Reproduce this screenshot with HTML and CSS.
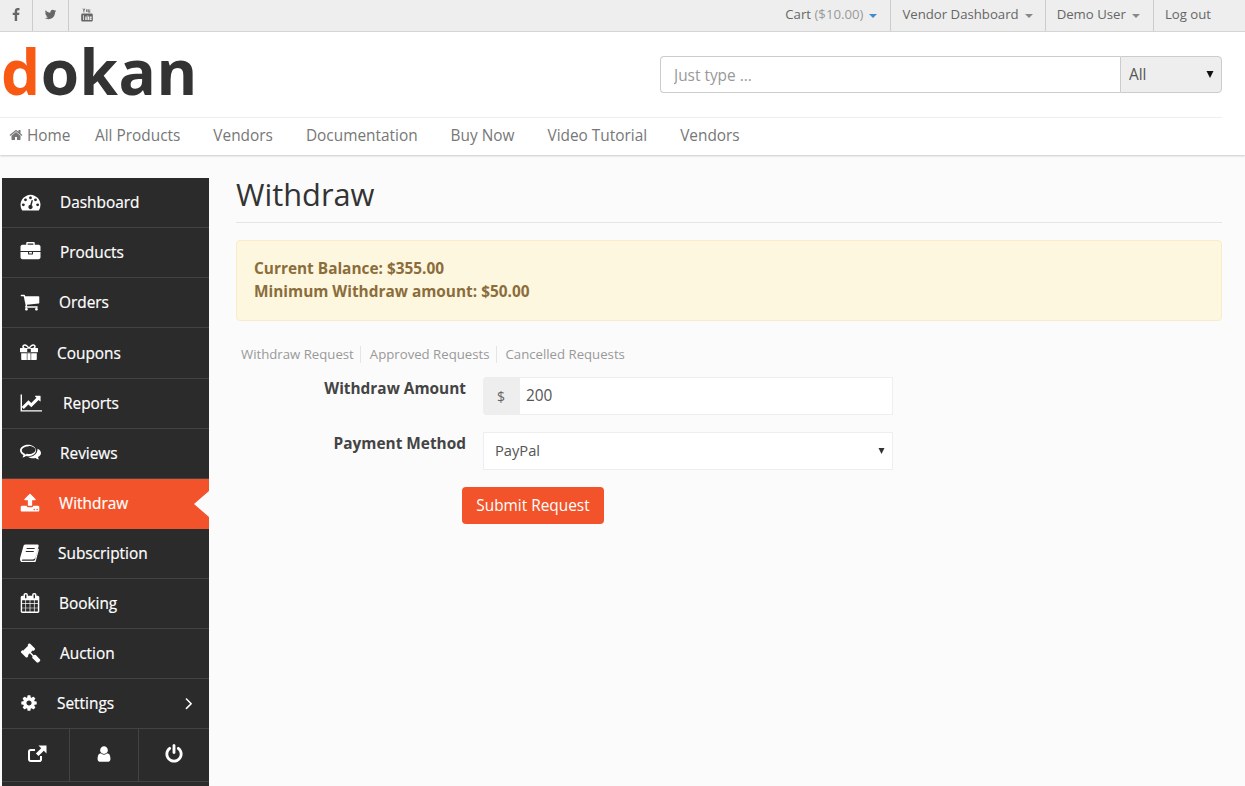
FILE: index.html
```html
<!DOCTYPE html>
<html lang="en">
<head>
<meta charset="utf-8">
<title>Withdraw</title>
<link rel="stylesheet" href="styles.css">
</head>
<body>
<div class="topbar">
  <ul class="social">
    <li><svg width="14" height="14" viewBox="0 0 1792 1792"><path d="M1343 12v264h-157q-86 0-116 36t-30 108v189h293l-39 296h-254v759h-306v-759h-255v-296h255v-218q0-186 104-288.5t277-102.5q147 0 228 12z"/></svg></li>
    <li><svg width="13" height="13" viewBox="0 0 1792 1792"><path d="M1684 408q-67 98-162 167 1 14 1 42 0 130-38 259.5t-115.5 248.5-184.5 210.5-258 146-323 54.5q-271 0-496-145 35 4 78 4 225 0 401-138-105-2-188-64.5t-114-159.5q33 5 61 5 43 0 85-11-112-23-185.5-111.5t-73.5-205.5v-4q68 38 146 41-66-44-105-115t-39-154q0-88 44-163 121 149 294.5 238.5t371.5 99.5q-8-38-8-74 0-134 94.5-228.5t228.5-94.5q140 0 236 102 109-21 205-78-37 115-142 178 93-10 186-50z"/></svg></li>
    <li><svg width="12" height="14" viewBox="0 0 12 14"><path d="M1.5 0.5l1 2.4v1.6h.8V2.900l1-2.400h-.8l-.6 1.500-.6-1.500zM5.200 1.300h1.300v2.700H5.200zM7.200 1.300h.7v2.200h.6V1.300h.7v3.100H7.200z"/><path fill-rule="evenodd" d="M1.500 5.600h9a1.300 1.300 0 0 1 1.300 1.300v5.300a1.300 1.300 0 0 1-1.300 1.300h-9a1.300 1.300 0 0 1-1.300-1.300V6.900a1.300 1.300 0 0 1 1.300-1.300zM2 7.300v4.800h.8V7.300zM4 8.400v3.700h1.700V8.400h-.7v3H4.700v-3zM6.500 7.300v4.800h1.600V8.400H7.200V7.300zM8.700 8.400v3.700h1.900v-1h-1.200v-.7h1.200v-2z"/></svg></li>
  </ul>
  <ul class="account">
    <li class="cart">Cart <span class="muted">($10.00)</span><i class="caret caret-blue"></i></li>
    <li>Vendor Dashboard<i class="caret"></i></li>
    <li class="user">Demo User<i class="caret"></i></li>
    <li>Log out</li>
  </ul>
</div>
<header class="header">
  <div class="brand-row">
    <div class="logo"><span class="logo-d">d</span>okan</div>
    <form class="search">
      <input class="search-input" type="text" placeholder="Just type ...">
      <select class="search-select"><option>All</option></select>
    </form>
  </div>
  <nav class="nav">
    <a class="nav-home"><svg width="14" height="14" viewBox="0 0 1792 1792"><path d="M1472 992v480q0 26-19 45t-45 19h-384v-384h-256v384h-384q-26 0-45-19t-19-45v-480q0-1 .5-3t.5-3l575-474 575 474q1 2 1 6zm223-69l-62 74q-8 9-21 11h-3q-13 0-21-7l-692-577-692 577q-12 8-24 7-13-2-21-11l-62-74q-8-10-7-23.5t11-21.5l719-599q32-26 76-26t76 26l244 204v-195q0-14 9-23t23-9h192q14 0 23 9t9 23v408l219 182q10 8 11 21.5t-7 23.5z"/></svg> Home</a>
    <a>All Products</a>
    <a>Vendors</a>
    <a>Documentation</a>
    <a>Buy Now</a>
    <a>Video Tutorial</a>
    <a>Vendors</a>
  </nav>
</header>
<div class="page">
  <aside class="sidebar">
    <ul class="menu">
      <li><svg width="21" height="20" viewBox="0 0 1792 1792"><path d="M384 1152q0-53-37.500-90.500t-90.500-37.500-90.500 37.500-37.500 90.500 37.500 90.500 90.500 37.500 90.500-37.500 37.500-90.500zm192-448q0-53-37.500-90.500t-90.500-37.500-90.500 37.500-37.500 90.500 37.500 90.500 90.500 37.500 90.500-37.500 37.500-90.500zm428 481l101-382q6-26-7.500-48.500t-38.500-29.500-48 6.500-30 39.500l-101 382q-60 5-107 43.500t-63 98.500q-20 77 20 146t117 89 146-20 89-117q16-60-6-117t-72-91zm660-33q0-53-37.500-90.500t-90.500-37.500-90.500 37.500-37.500 90.500 37.500 90.500 90.500 37.500 90.500-37.500 37.500-90.500zm-640-640q0-53-37.500-90.500t-90.500-37.500-90.500 37.500-37.500 90.500 37.500 90.500 90.500 37.500 90.500-37.500 37.500-90.500zm448 192q0-53-37.500-90.500t-90.500-37.500-90.500 37.500-37.500 90.500 37.500 90.500 90.500 37.500 90.500-37.500 37.500-90.500zm320 448q0 261-141 483-19 29-54 29h-1402q-35 0-54-29-141-221-141-483 0-182 71-348t191-286 286-191 348-71 348 71 286 191 191 286 71 348z"/></svg>Dashboard</li>
      <li><svg width="21" height="20" viewBox="0 0 1792 1792"><path d="M640 256h512v-128h-512v128zm1152 640v480q0 66-47 113t-113 47h-1472q-66 0-113-47t-47-113v-480h672v160q0 26 19 45t45 19h320q26 0 45-19t19-45v-160h672zm-768 0v128h-256v-128h256zm768-480v384h-1792v-384q0-66 47-113t113-47h352v-160q0-40 28-68t68-28h576q40 0 68 28t28 68v160h352q66 0 113 47t47 113z"/></svg>Products</li>
      <li><svg width="20" height="20" viewBox="0 0 1792 1792"><path d="M704 1536q0 52-38 90t-90 38-90-38-38-90 38-90 90-38 90 38 38 90zm896 0q0 52-38 90t-90 38-90-38-38-90 38-90 90-38 90 38 38 90zm128-1088v512q0 24-16.500 42.500t-40.500 21.500l-1044 122q13 60 13 70 0 16-24 64h920q26 0 45 19t19 45-19 45-45 19h-1024q-26 0-45-19t-19-45q0-11 8-31.500t16-36 21.500-40 15.500-29.500l-177-823h-204q-26 0-45-19t-19-45 19-45 45-19h256q16 0 28.500 6.500t19.500 15.500 13 24.500 8 26 5.500 29.500 4.500 26h1201q26 0 45 19t19 45z"/></svg>Orders</li>
      <li><svg width="18" height="18" viewBox="0 0 18 18"><path fill-rule="evenodd" d="M4.800 1.200c1.700 0 3.300 1.500 4.200 3 .9-1.500 2.500-3 4.200-3 1.500 0 2.600 1 2.600 2.300 0 .6-.2 1.100-.6 1.500h2.300c.3 0 .5.200.5.500v3.300c0 .3-.2.500-.5.500H.5c-.3 0-.5-.2-.5-.500V5.500c0-.3.200-.5.500-.5h2.300c-.4-.4-.6-.9-.6-1.500 0-1.300 1.100-2.300 2.600-2.300zm0 1.500c-.6 0-1 .4-1 .9 0 .7.600 1.400 1.500 1.400h2.500c-.7-1.200-1.900-2.300-3-2.300zm8.400 0c-1.100 0-2.300 1.100-3 2.300h2.500c.9 0 1.500-.7 1.500-1.400 0-.5-.4-.9-1-.9zM7.200 5.800v3.300h3.600V5.800z"/><path d="M1.200 10.200h5.600v6.800H2.200c-.6 0-1-.4-1-1zM11.200 10.200h5.600V16c0 .6-.4 1-1 1h-4.600zM7.400 10.200h3.200v6.800H7.400z"/></svg>Coupons</li>
      <li><svg width="24" height="20" viewBox="0 0 2048 1792"><path d="M1920 1536v128h-1920v-1536h128v1408h1792zm-128-1248v435q0 21-19.500 29.500t-35.500-7.500l-121-121-633 633q-10 10-23 10t-23-10l-233-233-416 416-192-192 585-585q10-10 23-10t23 10l233 233 464-464-121-121q-16-16-7.500-35.500t29.500-19.500h435q14 0 23 9t9 23z"/></svg>Reports</li>
      <li><svg width="21" height="18" viewBox="0 0 21 18"><path fill-rule="evenodd" d="M8 .8c4.400 0 8 2.500 8 5.700s-3.600 5.700-8 5.700c-.7 0-1.400-.1-2-.2-1 .8-2.200 1.300-3.600 1.500.5-.8.900-1.600 1-2.500C1.400 10 0 8.400 0 6.500 0 3.300 3.600.8 8 .8zm0 1.800C4.700 2.600 1.800 4.400 1.800 6.500c0 1.400 1.200 2.500 2.900 3.200l.8.300-.1.900c.4-.3.700-.5 1-.8l.3-.4.8.1c.6.100 1.100.200 1.700.200 3.300 0 6.200-1.800 6.200-4 0-2.200-2.900-3.900-6.400-3.900z"/><path d="M17.600 4.700c2 .9 3.400 2.500 3.400 4.300 0 1.700-1.200 3.200-3 4.100.1.900.5 1.700 1 2.400-1.400-.2-2.600-.7-3.600-1.500-.7.100-1.400.2-2.200.2-2 0-3.800-.5-5.100-1.500 3.300.2 9.600-1.200 9.500-8.500z"/></svg>Reviews</li>
      <li class="active"><svg width="20" height="20" viewBox="0 0 1792 1792"><path d="M1344 1472q0-26-19-45t-45-19-45 19-19 45 19 45 45 19 45-19 19-45zm256 0q0-26-19-45t-45-19-45 19-19 45 19 45 45 19 45-19 19-45zm128-224v320q0 40-28 68t-68 28h-1472q-40 0-68-28t-28-68v-320q0-40 28-68t68-28h427q21 56 70.500 92t110.500 36h256q61 0 110.500-36t70.500-92h427q40 0 68 28t28 68zm-325-648q-17 40-59 40h-256v448q0 26-19 45t-45 19h-256q-26 0-45-19t-19-45v-448h-256q-42 0-59-40-17-39 14-69l448-448q18-19 45-19t45 19l448 448q31 30 14 69z"/></svg>Withdraw</li>
      <li><svg width="19" height="18" viewBox="0 0 19 18"><path fill-rule="evenodd" d="M5.500.5h11.800c1 0 1.600.8 1.300 1.800l-3 11c-.4 1.300-1.600 2.200-3 2.200H3.200c-.9 0-1.400.5-1.400 1 0 .2.200.3.500.3h11.200c.8 0 1.300-.4 1.600-1.200l3-11c.5.200.9.800.7 1.500l-3 11c-.3 1-1.200 1.900-2.300 1.900H2.300C.8 18 0 16.600 0 15.200c0-.6.100-1.200.3-1.900L3.500 2C3.800 1 4.500.5 5.500.5zM6.800 4.100l-.3 1h8l.3-1zM5.900 7l-.3 1h8l.3-1z"/></svg>Subscription</li>
      <li><svg width="20" height="20" viewBox="0 0 1792 1792"><path d="M192 1664h288v-288h-288v288zm352 0h320v-288h-320v288zm-352-352h288v-320h-288v320zm352 0h320v-320h-320v320zm-352-384h288v-288h-288v288zm736 736h320v-288h-320v288zm-384-736h320v-288h-320v288zm768 736h288v-288h-288v288zm-384-352h320v-320h-320v320zm-352-864v-288q0-13-9.500-22.500t-22.500-9.500h-64q-13 0-22.500 9.500t-9.500 22.500v288q0 13 9.500 22.500t22.500 9.500h64q13 0 22.500-9.500t9.500-22.500zm736 864h288v-320h-288v320zm-384-384h320v-288h-320v288zm384 0h288v-288h-288v288zm32-480v-288q0-13-9.500-22.500t-22.500-9.500h-64q-13 0-22.500 9.500t-9.500 22.500v288q0 13 9.500 22.500t22.500 9.500h64q13 0 22.500-9.500t9.500-22.500zm384-64v1280q0 52-38 90t-90 38h-1408q-52 0-90-38t-38-90v-1280q0-52 38-90t90-38h128v-96q0-66 47-113t113-47h64q66 0 113 47t47 113v96h384v-96q0-66 47-113t113-47h64q66 0 113 47t47 113v96h128q52 0 90 38t38 90z"/></svg>Booking</li>
      <li><svg width="21" height="20" viewBox="0 0 1792 1792"><path d="M1771 1536q0 53-37 90l-107 108q-39 37-91 37-53 0-90-37l-363-364q-38-36-38-90 0-53 43-96l-256-256-126 126q-14 14-34 14t-34-14q2 2 12.500 12t12.500 13 10 11.500 10 13.500 6 13.500 5.500 16.500 1.500 18q0 38-28 68-3 3-16.500 18t-19 20.500-18.500 16.500-22 15.500-22 9-26 4.500q-40 0-68-28l-408-408q-28-28-28-68 0-13 4.500-26t9-22 15.500-22 16.500-18.500 20.500-19 18-16.500q30-28 68-28 10 0 18 1.500t16.500 5.500 13.500 6 13.500 10 11.500 10 13 12.500 12 12.500q-14-14-14-34t14-34l348-348q14-14 34-14t34 14q-2-2-12.500-12t-12.500-13-10-11.500-10-13.500-6-13.500-5.500-16.500-1.500-18q0-38 28-68 3-3 16.500-18t19-20.500 18.500-16.500 22-15.500 22-9 26-4.500q40 0 68 28l408 408q28 28 28 68 0 13-4.500 26t-9 22-15.500 22-16.500 18.500-20.500 19-18 16.500q-30 28-68 28-10 0-18-1.500t-16.500-5.500-13.500-6-13.500-10-11.500-10-13-12.500-12-12.500q14 14 14 34t-14 34l-126 126 256 256q43-43 96-43 52 0 91 37l363 363q37 39 37 91z"/></svg>Auction</li>
      <li class="has-sub"><svg width="18" height="20" viewBox="0 0 1792 1792"><path d="M1152 896q0-106-75-181t-181-75-181 75-75 181 75 181 181 75 181-75 75-181zm512-109v222q0 12-8 23t-20 13l-185 28q-19 54-39 91 35 50 107 138 10 12 10 25t-9 23q-27 37-99 108t-94 71q-12 0-26-9l-138-108q-44 23-91 38-16 136-29 186-7 28-36 28h-222q-14 0-24.500-8.500t-11.500-21.500l-28-184q-49-16-90-37l-141 107q-10 9-25 9-14 0-25-11-126-114-165-168-7-10-7-23 0-12 8-23 15-21 51-66.500t54-70.500q-27-50-41-99l-183-27q-13-2-21-12.500t-8-23.500v-222q0-12 8-23t19-13l186-28q14-46 39-92-40-57-107-138-10-12-10-24 0-10 9-23 26-36 98.500-107.500t94.500-71.500q13 0 26 10l138 107q44-23 91-38 16-136 29-186 7-28 36-28h222q14 0 24.500 8.500t11.500 21.500l28 184q49 16 90 37l142-107q9-9 24-9 13 0 25 10 129 119 165 170 7 8 7 22 0 12-8 23-15 21-51 66.500t-54 70.500q26 50 41 98l183 28q13 2 21 12.500t8 23.500z"/></svg>Settings<svg class="chev" width="20" height="20" viewBox="0 0 1792 1792"><path d="M1171 960q0 13-10 23l-466 466q-10 10-23 10t-23-10l-50-50q-10-10-10-23t10-23l393-393-393-393q-10-10-10-23t10-23l50-50q10-10 23-10t23 10l466 466q10 10 10 23z"/></svg></li>
    </ul>
    <div class="sidebar-foot">
      <span><svg width="20" height="18" viewBox="0 0 20 18"><path fill="none" stroke="#fff" stroke-width="2" d="M14 11v3.200c0 1-.7 1.800-1.800 1.800H3.800C2.700 16 2 15.200 2 14.200V6.800C2 5.700 2.700 5 3.800 5H8"/><path d="M11.500 .5H19.500v8l-2.700-2.700-5.300 5.300-2.600-2.600 5.300-5.300z"/></svg></span>
      <span><svg width="18" height="20" viewBox="0 0 1792 1792"><path d="M1536 1399q0 109-62.500 187t-150.500 78h-854q-88 0-150.500-78t-62.500-187q0-85 8.500-160.500t31.500-152 58.500-131 94-89 134.500-34.500q131 128 313 128t313-128q76 0 134.500 34.500t94 89 58.500 131 31.500 152 8.500 160.500zm-256-887q0 159-112.500 271.500t-271.500 112.500-271.500-112.500-112.500-271.500 112.500-271.500 271.500-112.500 271.500 112.500 112.500 271.500z"/></svg></span>
      <span><svg width="20" height="20" viewBox="0 0 1792 1792"><path d="M1664 896q0 156-61 298t-164 245-245 164-298 61-298-61-245-164-164-245-61-298q0-182 80.500-343t226.500-270q43-32 95.500-25t83.500 50q32 42 24.500 94.500t-49.500 84.500q-98 74-151.500 181t-53.500 228q0 104 40.500 198.500t109.500 163.500 163.500 109.500 198.500 40.500 198.500-40.500 163.500-109.500 109.500-163.500 40.500-198.500q0-121-53.500-228t-151.500-181q-42-32-49.500-84.500t24.500-94.500q31-43 84-50t95 25q146 109 226.500 270t80.500 343zm-640-768v640q0 52-38 90t-90 38-90-38-38-90v-640q0-52 38-90t90-38 90 38 38 90z"/></svg></span>
    </div>
  </aside>
  <main class="content">
    <h1 class="title">Withdraw</h1>
    <div class="alert">
      <div>Current Balance: $355.00</div>
      <div>Minimum Withdraw amount: $50.00</div>
    </div>
    <ul class="tabs">
      <li>Withdraw Request</li>
      <li>Approved Requests</li>
      <li>Cancelled Requests</li>
    </ul>
    <form class="form">
      <div class="row">
        <label class="label">Withdraw Amount</label>
        <div class="field group"><span class="addon">$</span><input class="control" type="text" value="200"></div>
      </div>
      <div class="row">
        <label class="label">Payment Method</label>
        <div class="field"><select class="control select"><option>PayPal</option></select></div>
      </div>
      <div class="actions"><button class="btn" type="button">Submit Request</button></div>
    </form>
  </main>
</div>
</body>
</html>
```
FILE: styles.css
```css
* { box-sizing: border-box; }
html, body { margin: 0; padding: 0; height: 100%; }
body {
  display: flex;
  flex-direction: column;
  height: 786px;
  overflow: hidden;
  background: #fbfbfb;
  font-family: "Open Sans", sans-serif;
  font-size: 15.400px;
  color: #444;
}
ul { list-style: none; margin: 0; padding: 0; }

.topbar {
  display: flex;
  justify-content: space-between;
  height: 32px;
  padding-right: 23px;
  background: #eee;
  border-bottom: 1px solid #d8d8d8;
  font-size: 13.200px;
  color: #666;
  flex: none;
}
.social, .account { display: flex; }
.social li {
  display: flex;
  align-items: center;
  justify-content: center;
  width: 36px;
  padding-bottom: 2px;
  border-right: 1px solid #ccc;
}
.social li:first-child { width: 33px; }
.social li:last-child { border-right: 0; }
.social svg { fill: #666; }
.account li {
  padding: 0 11px;
  line-height: 29px;
  border-left: 1px solid #ccc;
  white-space: nowrap;
}
.account li:first-child { border-left: 0; }
.account .cart { padding-right: 12px; }
.account .user { padding-right: 12px; }
.muted { color: #999; }
.caret {
  display: inline-block;
  width: 0;
  height: 0;
  margin: 0 1px 0 6px;
  vertical-align: 1px;
  border-left: 4px solid transparent;
  border-right: 4px solid transparent;
  border-top: 4px solid #888;
}
.caret-blue { border-top-color: #428bca; }

.header {
  flex: none;
  height: 123px;
  padding-right: 23px;
  background: #fff;
  box-shadow: 0 1px 2px rgba(0, 0, 0, .2);
  position: relative;
}
.brand-row {
  display: flex;
  justify-content: space-between;
  align-items: flex-start;
  height: 86px;
  border-bottom: 1px solid #eee;
}
.logo {
  margin: 0 0 0 1px;
  font-size: 62px;
  line-height: 78px;
  font-weight: 700;
  letter-spacing: .5px;
  color: #333;
}
.logo-d { color: #f85a14; }
.search { display: flex; width: 562px; height: 37px; margin-top: 24px; }
.search-input {
  flex: 1;
  min-width: 0;
  padding: 1px 13px 0;
  border: 1px solid #ccc;
  border-right: 0;
  border-radius: 4px 0 0 4px;
  font: 15.400px "Open Sans", sans-serif;
  color: #555;
  background: #fff;
}
.search-input::placeholder { color: #999; }
.search-select {
  appearance: none;
  width: 102px;
  padding: 0 8px;
  border: 1px solid #ccc;
  border-radius: 0 4px 4px 0;
  background: #eee url("data:image/svg+xml,%3Csvg xmlns='http://www.w3.org/2000/svg' width='8' height='7'%3E%3Cpath d='M.5 0h7L4 7z' fill='%23111'/%3E%3C/svg%3E") no-repeat right 7px center;
  font: 15.400px "Open Sans", sans-serif;
  color: #555;
}
.nav {
  display: flex;
  align-items: center;
  gap: 33px;
  height: 37px;
  padding: 0 0 2px 9px;
  color: #777;
}
.nav-home { margin-right: -8.500px; white-space: nowrap; }
.nav-home svg { fill: #777; vertical-align: -1px; }

.page { flex: 1; display: flex; min-height: 0; padding-top: 23px; }
.sidebar {
  flex: none;
  width: 207px;
  margin-left: 2px;
  background: #2b2b2b;
  color: #fff;
  font-size: 15.400px;
  font-weight: 500;
  -webkit-text-stroke: .2px #fff;
}
.menu li {
  display: flex;
  align-items: center;
  gap: 19px;
  height: 50px;
  padding: 0 0 0 18px;
  border-bottom: 1px solid #434343;
  position: relative;
}
.menu li:nth-child(4) { height: 51px; }
.menu svg { fill: #fff; flex: none; margin-bottom: 2px; }
.menu .chev { margin-left: auto; margin-right: 10px; }
.menu .active { background: #f2532a; border-bottom-color: #f2532a; }
.menu .active::after {
  content: "";
  position: absolute;
  right: 0;
  top: 12px;
  border-top: 13px solid transparent;
  border-bottom: 13px solid transparent;
  border-right: 15px solid #fbfbfb;
}
.sidebar-foot { display: flex; height: 53px; border-bottom: 1px solid #434343; }
.sidebar-foot span {
  flex: 1;
  display: flex;
  align-items: center;
  justify-content: center;
  padding-bottom: 3px;
  border-left: 1px solid #434343;
}
.sidebar-foot span:first-child { flex: none; width: 67px; padding-left: 2px; border-left: 0; }
.sidebar-foot span:nth-child(2) { flex: none; width: 69px; }
.sidebar-foot svg { fill: #fff; }

.content { flex: 1; min-width: 0; padding: 0 23px 0 27px; }
.title {
  margin: 0;
  height: 45px;
  border-bottom: 1px solid #e5e5e5;
  font-size: 30.800px;
  line-height: 33px;
  font-weight: 400;
  color: #333;
}
.alert {
  margin-top: 17px;
  height: 81px;
  padding: 16px 17px;
  background: #fef7e0;
  border: 1px solid #faebcc;
  border-radius: 4px;
  color: #8a6d3b;
  font-weight: 700;
  line-height: 23px;
}
.tabs {
  display: flex;
  margin-top: 25px;
  padding-left: 5px;
  font-size: 13.200px;
  line-height: 17px;
  color: #999;
}
.tabs li { padding-right: 6px; margin-right: 9px; border-right: 1px solid #e5e5e5; }
.tabs li:last-child { border-right: 0; }
.form { margin-top: 14px; }
.row { display: flex; margin-bottom: 17px; }
.label {
  width: 230px;
  text-align: right;
  font-weight: 700;
  line-height: 24px;
  color: #444;
}
.field { display: flex; width: 410px; height: 38px; margin-left: 17px; }
.addon {
  display: flex;
  align-items: center;
  justify-content: center;
  width: 36px;
  padding-top: 1px;
  background: #eee;
  border: 1px solid #eee;
  border-radius: 3px 0 0 3px;
  font-size: 14px;
  color: #666;
}
.control {
  flex: 1;
  min-width: 0;
  padding: 0 6px 2px;
  border: 1px solid #eee;
  background: #fff;
  font: 15.400px "Open Sans", sans-serif;
  color: #555;
}
.select {
  appearance: none;
  padding: 0 11px 2px;
  font-size: 14.700px;
  background: #fff url("data:image/svg+xml,%3Csvg xmlns='http://www.w3.org/2000/svg' width='7' height='6'%3E%3Cpath d='M.5 0h6L3.500 6z' fill='%23333'/%3E%3C/svg%3E") no-repeat right 7px center;
}
.actions { padding-left: 226px; }
.btn {
  width: 142px;
  height: 37px;
  padding: 0;
  border: 0;
  border-radius: 4px;
  background: #f2532a;
  color: #fff;
  font: 15.400px "Open Sans", sans-serif;
}
```
